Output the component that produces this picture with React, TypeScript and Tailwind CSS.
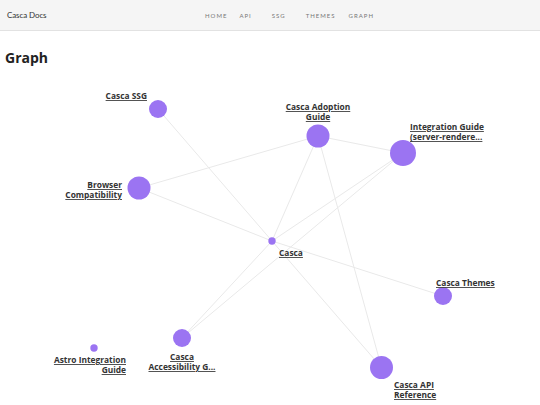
import React from "react";

type N = { id: string; x: number; y: number; r: number; lines: string[]; anchor: "start" | "middle" | "end"; lx: number; ly: number };

const nodes: N[] = [
  { id: "ssg", x: 158, y: 109, r: 9, lines: ["Casca SSG"], anchor: "end", lx: 147, ly: 99 },
  { id: "adopt", x: 318, y: 136, r: 11.5, lines: ["Casca Adoption", "Guide"], anchor: "middle", lx: 318, ly: 110 },
  { id: "integ", x: 403, y: 153, r: 13, lines: ["Integration Guide", "(server-rendere..."], anchor: "start", lx: 410, ly: 130 },
  { id: "browser", x: 139, y: 188, r: 11.5, lines: ["Browser", "Compatibility"], anchor: "end", lx: 122, ly: 188 },
  { id: "casca", x: 272, y: 241, r: 3.7, lines: ["Casca"], anchor: "start", lx: 279, ly: 256 },
  { id: "themes", x: 443, y: 296, r: 9, lines: ["Casca Themes"], anchor: "start", lx: 436, ly: 286 },
  { id: "astro", x: 94, y: 348, r: 3.7, lines: ["Astro Integration", "Guide"], anchor: "end", lx: 126, ly: 363 },
  { id: "a11y", x: 182, y: 338, r: 9, lines: ["Casca", "Accessibility G..."], anchor: "middle", lx: 182, ly: 360 },
  { id: "api", x: 381.5, y: 367.5, r: 11.5, lines: ["Casca API", "Reference"], anchor: "start", lx: 394, ly: 388 },
];

const edges: [string, string][] = [
  ["ssg", "casca"],
  ["browser", "adopt"],
  ["browser", "casca"],
  ["adopt", "integ"],
  ["adopt", "casca"],
  ["adopt", "api"],
  ["integ", "casca"],
  ["integ", "a11y"],
  ["casca", "a11y"],
  ["casca", "themes"],
  ["casca", "api"],
];

const byId = Object.fromEntries(nodes.map((n) => [n.id, n]));

export default function App() {
  const navs: [string, string][] = [
    ["HOME", "ml-[205px]"],
    ["API", "ml-[12px]"],
    ["SSG", "ml-[20px]"],
    ["THEMES", "ml-[20px]"],
    ["GRAPH", "ml-[13px]"],
  ];
  return (
    <div className="w-[540px] h-[405px] bg-white overflow-hidden" style={{ fontFamily: "'Open Sans', sans-serif" }}>
      <header className="h-[31px] bg-[#f5f5f5] border-b border-[#e2e2e2] flex items-center relative">
        <span className="absolute left-[7px] text-[8px] text-[#333] font-['Lato',sans-serif] tracking-[-0.1px]">Casca Docs</span>
        <nav className="flex items-center">
          {navs.map(([t, c]) => (
            <span key={t} className={`${c} text-[6px] tracking-[1px] text-[#777] font-['Lato',sans-serif]`}>
              {t}
            </span>
          ))}
        </nav>
      </header>
      <h1 className="mt-[17px] ml-[5px] h-[20px] leading-[20px] text-[14px] font-bold text-[#222] font-['Open_Sans',sans-serif]">Graph</h1>
      <svg width={540} height={330} viewBox="0 75 540 330" className="mt-[7px] block">
        {edges.map(([a, b]) => (
          <line key={a + b} x1={byId[a].x} y1={byId[a].y} x2={byId[b].x} y2={byId[b].y} stroke="#e9e9e9" strokeWidth={1} />
        ))}
        {nodes.map((n) => (
          <g key={n.id}>
            <circle cx={n.x} cy={n.y} r={n.r} fill="#9b74f2" />
            <text
              x={n.lx}
              y={n.ly}
              textAnchor={n.anchor}
              fontSize={8.4}
              fontWeight={700}
              fill="#333"
              style={{ textDecoration: "underline", fontFamily: "'Open Sans', sans-serif" }}
            >
              {n.lines.map((l, i) => (
                <tspan key={i} x={n.lx} dy={i === 0 ? 0 : 10}>
                  {l}
                </tspan>
              ))}
            </text>
          </g>
        ))}
      </svg>
    </div>
  );
}
